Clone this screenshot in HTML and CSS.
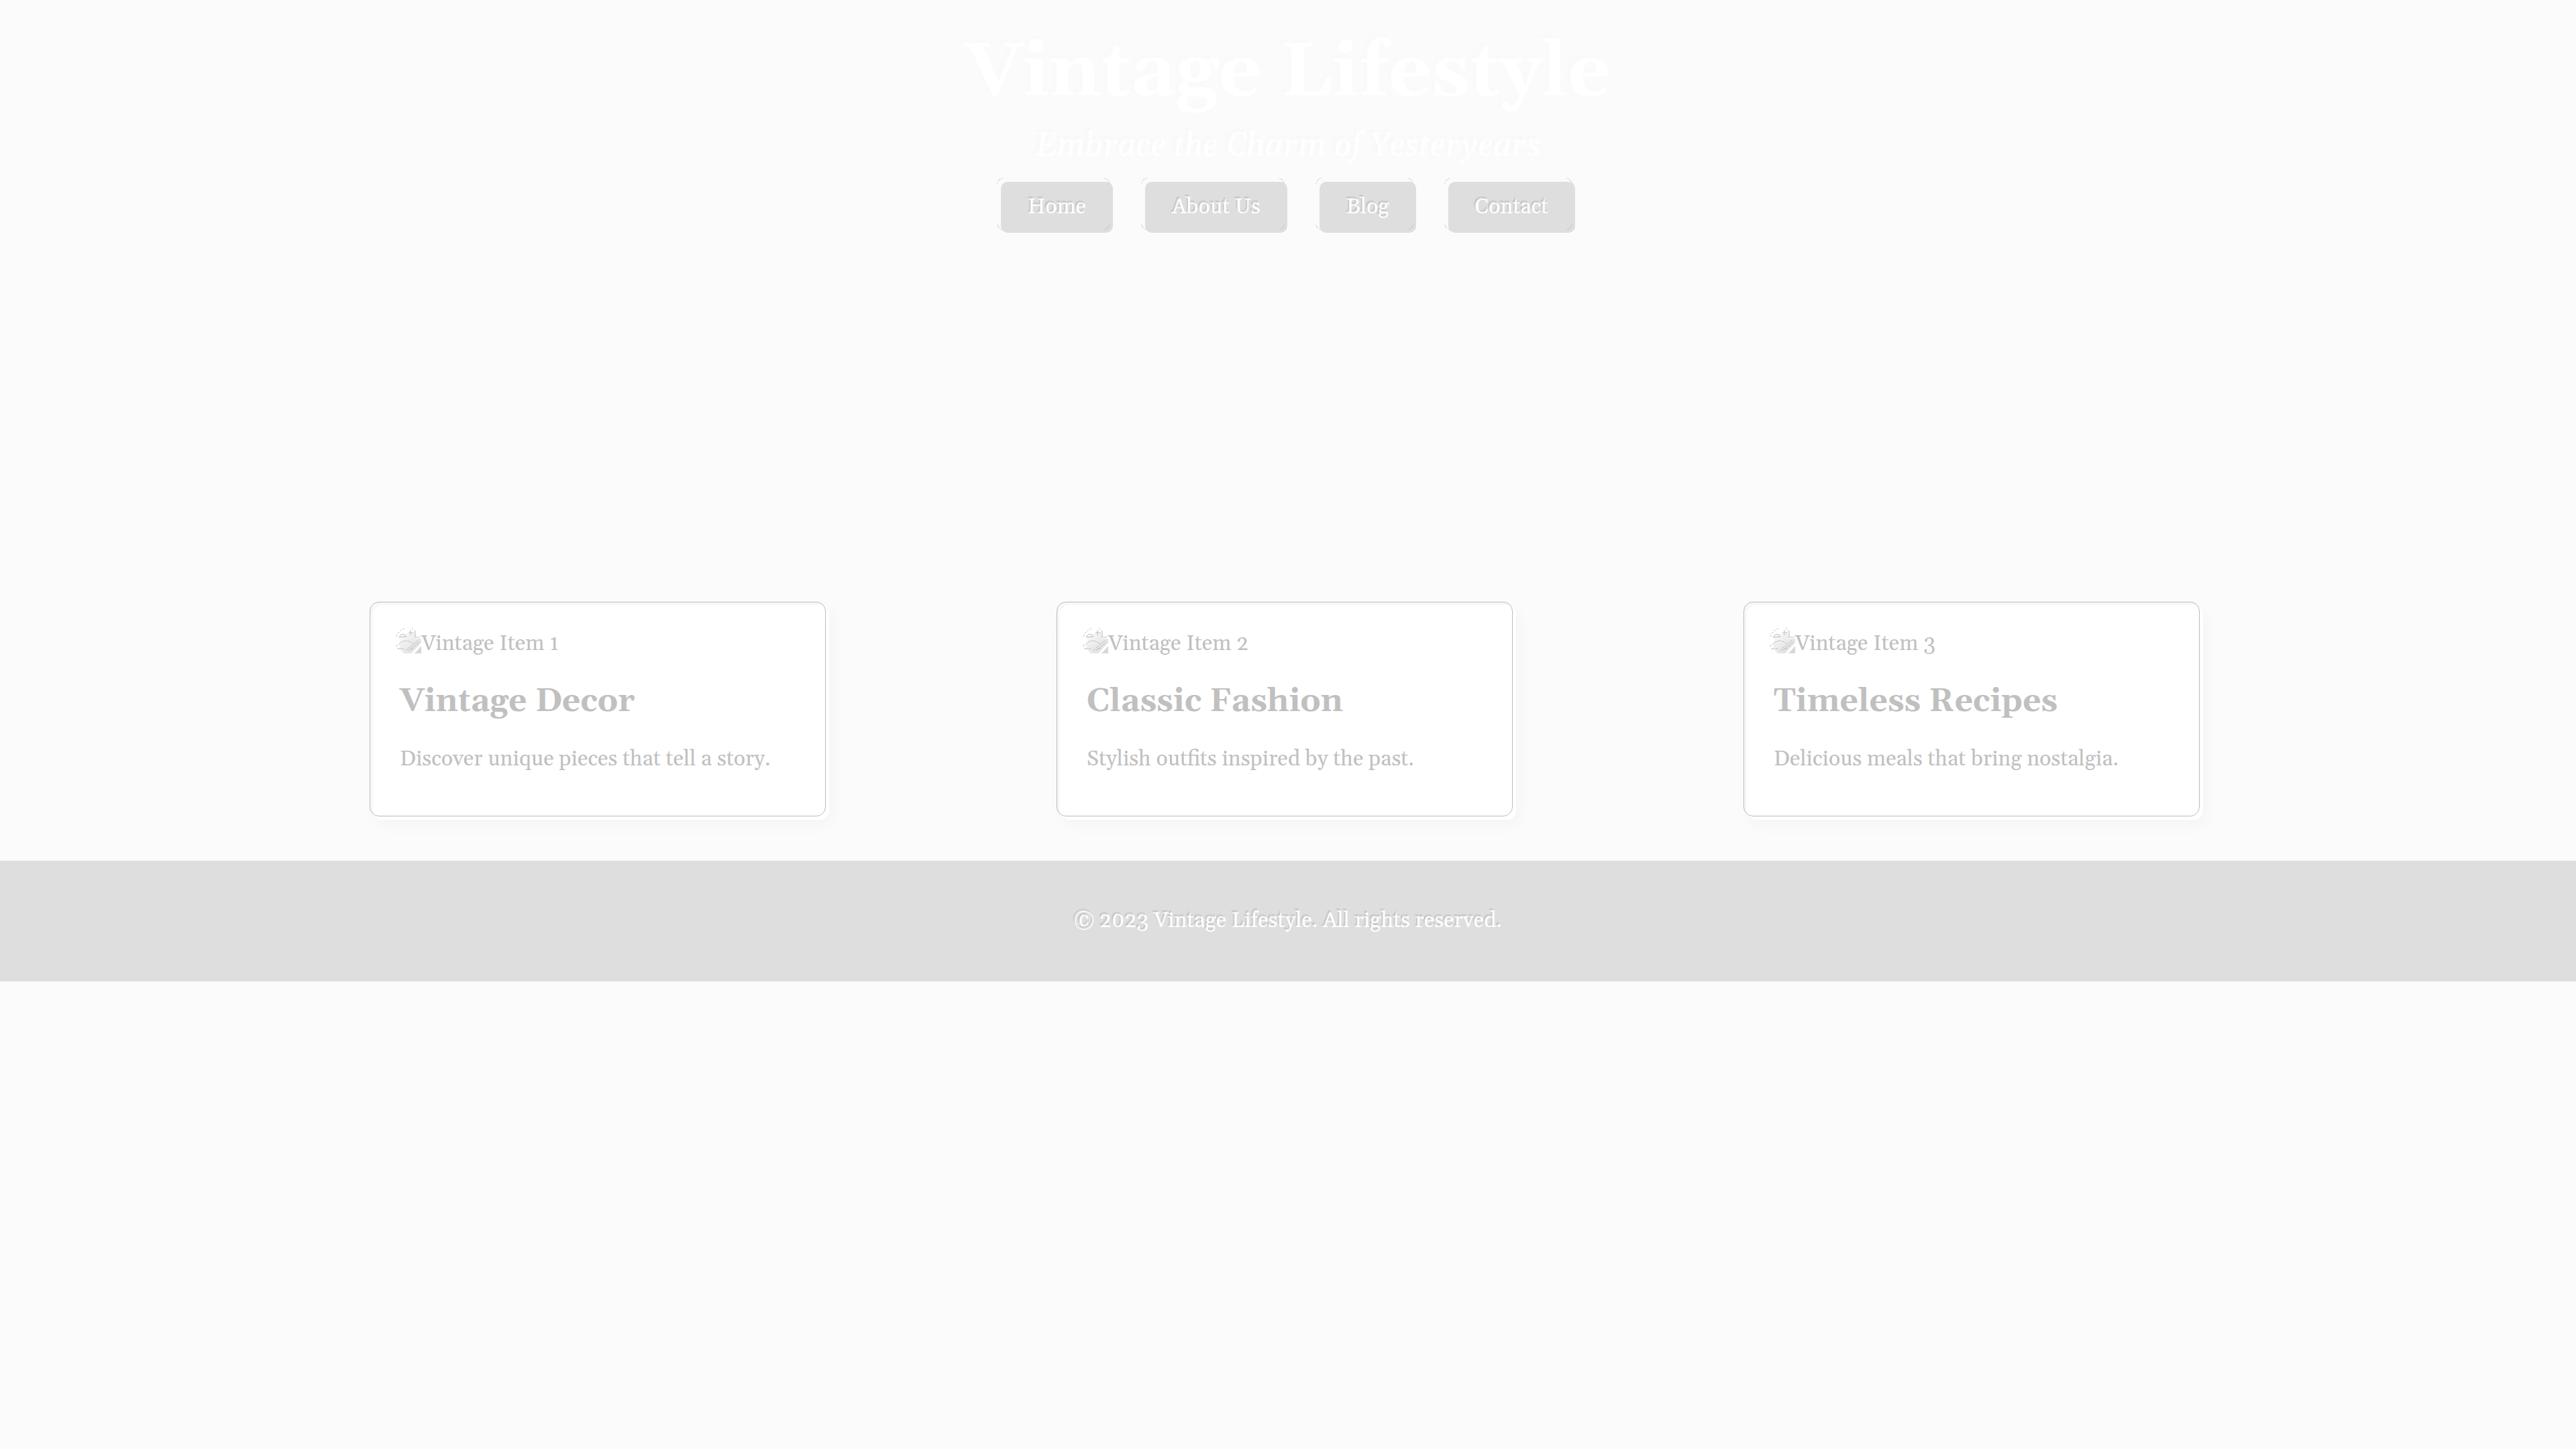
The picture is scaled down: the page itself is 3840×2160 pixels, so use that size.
FILE: index.html
```html
<!DOCTYPE html>
<html lang="en">
<head>
<meta charset="utf-8">
<title>Vintage Lifestyle</title>
<link rel="stylesheet" href="styles.css">
</head>
<body>
<svg class="defs" aria-hidden="true">
  <defs>
    <linearGradient id="page" x1="0" y1="0" x2="1" y2="1">
      <stop offset="0" stop-color="#fcfcfc"/><stop offset="1" stop-color="#dadada"/>
    </linearGradient>
    <symbol id="picture" viewBox="0 0 38 38">
      <path d="M8 12L17 8H29V16H38V22L23 38H12Q6 33 5 26Z" fill="url(#page)"/>
      <path d="M28 38L38 27V38Z" fill="#d8d8d8"/>
      <g fill="none" stroke="#bbb" stroke-width="1">
        <path d="M1 13Q4 4 13 1M24 0L31 7M1 25Q2 30 4 32" stroke-dasharray="3 2"/>
        <path d="M5 14Q10 5 16 13ZM22 3V11M19 7H27M29 5V14H36"/>
        <path d="M4 25Q14 14 26 24M15 34L34 18M19 34L36 21M4 31H12M22 31H27" stroke-dasharray="4 1"/>
      </g>
    </symbol>
  </defs>
</svg>
<header class="header">
  <h1 class="title">Vintage Lifestyle</h1>
  <p class="tagline">Embrace the Charm of Yesteryears</p>
  <nav class="nav">
    <a class="nav-link" href="#home">Home</a>
    <a class="nav-link" href="#about">About Us</a>
    <a class="nav-link" href="#blog">Blog</a>
    <a class="nav-link" href="#contact">Contact</a>
  </nav>
</header>
<main class="cards">
  <article class="card">
    <div class="picture"><svg class="icon" aria-hidden="true"><use href="#picture"/></svg><span>Vintage Item 1</span></div>
    <h2 class="card-title">Vintage Decor</h2>
    <p class="card-text">Discover unique pieces that tell a story.</p>
  </article>
  <article class="card">
    <div class="picture"><svg class="icon" aria-hidden="true"><use href="#picture"/></svg><span>Vintage Item 2</span></div>
    <h2 class="card-title">Classic Fashion</h2>
    <p class="card-text">Stylish outfits inspired by the past.</p>
  </article>
  <article class="card">
    <div class="picture"><svg class="icon" aria-hidden="true"><use href="#picture"/></svg><span>Vintage Item 3</span></div>
    <h2 class="card-title">Timeless Recipes</h2>
    <p class="card-text">Delicious meals that bring nostalgia.</p>
  </article>
</main>
<footer class="footer"><p class="copyright">© 2023 Vintage Lifestyle. All rights reserved.</p></footer>
</body>
</html>
```
FILE: styles.css
```css
* { box-sizing: border-box; }
body {
  margin: 0;
  background: #fbfbfb;
  color: #c0c0c0;
  font: 32px/36px Georgia, Gelasio, "Liberation Serif", serif;
}
h1, h2, p { margin: 0; }
.defs { display: block; width: 0; height: 0; }
.header {
  display: flex;
  flex-direction: column;
  align-items: center;
  padding: 40px 40px 0;
  color: #fff;
  text-align: center;
}
.title { font-size: 112px; line-height: 138px; text-shadow: -6px -6px 0 #fafafa; }
.tagline { margin-top: 10px; font-size: 48px; line-height: 60px; font-style: italic; text-shadow: -5px -5px 0 #f9f9f9; }
.nav { display: flex; gap: 48px; margin-top: 23px; }
.nav-link {
  position: relative;
  padding: 20px 40px;
  border-radius: 10px;
  background: #dedede;
  color: #fff;
  text-decoration: none;
  text-shadow: -2px -3px 0 #c8c8c8;
}
/* embossed corner marks */
.nav-link::before {
  content: "";
  position: absolute;
  inset: -6px 4px 4px -6px;
  border: 1px dotted #999;
  border-radius: 10px;
  mask:
    linear-gradient(#000 0 0) 0 0 / 9px 9px no-repeat,
    linear-gradient(#000 0 0) 100% 0 / 9px 9px no-repeat,
    linear-gradient(#000 0 0) 0 100% / 9px 9px no-repeat,
    linear-gradient(#000 0 0) 100% 100% / 9px 9px no-repeat;
}
.cards {
  display: flex;
  justify-content: space-around;
  width: 80%;
  margin: 555px auto 61px;
}
.card {
  position: relative;
  width: 680px;
  padding: 40px;
  border-radius: 14px;
  background: #fff;
  box-shadow: -5px -5px 0 #f8f8f8, 4px 8px 24px rgba(0, 0, 0, .03);
}
.card::before {
  content: "";
  position: absolute;
  inset: -5px 5px 5px -5px;
  border: 1px solid #bbb;
  border-radius: 14px;
}
.picture { display: flex; height: 36px; }
.icon { flex: none; width: 38px; height: 38px; margin: -6px 0 0 -6px; }
.card-title { margin-top: 40px; font-size: 48px; line-height: 56px; }
.card-text { margin: 38px 0 30px; line-height: 40px; }
.footer { padding: 72px 40px; background: #dedede; color: #fff; text-align: center; }
.copyright { text-shadow: -2px -3px 0 #c8c8c8; }
```
